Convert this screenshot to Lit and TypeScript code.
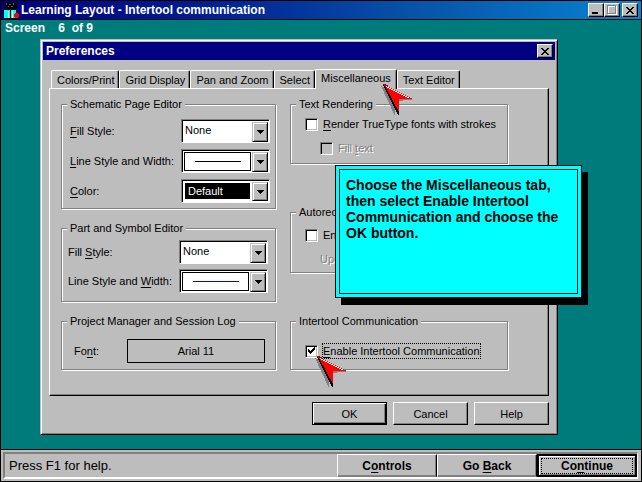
import { LitElement, html, css, nothing } from "lit";
import { customElement, property } from "lit/decorators.js";

const closeGlyph = html`<svg width="8" height="7" viewBox="0 0 8 7" shape-rendering="crispEdges" aria-hidden="true">
  <path d="M0 0h2v1h1v1h2V1h1V0h2v1H7v1H6v1H5v1h1v1h1v1h1v1H6V6H5V5H3v1H2v1H0V6h1V5h1V4h1V3H2V2H1V1H0z" />
</svg>`;

@customElement("pointer-arrow")
class PointerArrow extends LitElement {
  static styles = css`
    :host { display: block; pointer-events: none; }
    svg { display: block; }
  `;
  render() {
    return html`<svg width="34" height="34" viewBox="0 0 34 34" shape-rendering="crispEdges" aria-hidden="true">
      <path d="M1 3L15 33L16 18L30 17L33 16L30 15z" fill="#808080" />
      <path d="M3 1L33 16H19V31H18z" fill="#ff0000" />
      <path d="M3 2L18 32H19V24L7 5z" fill="#000" />
      <path d="M6 5L19 29V16H30z" fill="#ff0000" />
      <path d="M6 3.5L29 15" stroke="#fff" stroke-width="1" fill="none" />
      <path d="M3 1h2v1h2v1" stroke="#a00000" fill="none" />
    </svg>`;
  }
}

@customElement("combo-box")
class ComboBox extends LitElement {
  @property() text = "";
  @property() line = "";
  @property() label = "";
  @property({ type: Boolean }) picked = false;

  static styles = css`
    :host { display: block; width: 89px; flex: none; }
    .combo {
      display: grid; grid-template-columns: 1fr 16px; height: 24px; box-sizing: border-box;
      border: 1px solid; border-color: #808080 #fff #fff #808080;
      box-shadow: inset 1px 1px #000; background: #fff; padding: 2px 1px 1px 2px;
    }
    .combo > * { grid-row: 1; }
    select {
      grid-column: 1 / 3; appearance: none; border: 0; background: none; outline: none; width: 100%;
      margin: 0; padding: 0 16px 4px 1px; font: 11px/16px "Liberation Sans", sans-serif; color: #000;
    }
    .picked { color: #fff; background: #000 content-box; padding: 1px 18px 2px 1px; text-indent: 3px; }
    .swatch { grid-column: 1; border: 1px solid #000; margin: 0 1px 1px 0; display: flex; align-items: center; justify-content: center; pointer-events: none; }
    .drop {
      grid-column: 2; pointer-events: none; background: #bdbdbd; display: flex; align-items: center; justify-content: center;
      border: 1px solid; border-color: #bdbdbd #000 #000 #bdbdbd; box-shadow: inset 1px 1px #fff, inset -1px -1px #808080;
    }
    svg { display: block; }
  `;
  render() {
    return html`<div class="combo">
      <select class=${this.picked ? "picked" : nothing} aria-label=${this.label}><option>${this.text}</option></select>
      ${this.line
        ? html`<span class="swatch"><svg width="46" height="1" shape-rendering="crispEdges"><rect width="46" height="1" fill=${this.line} /></svg></span>`
        : nothing}
      <span class="drop"><svg width="7" height="4" shape-rendering="crispEdges"><path d="M0 0h7v1H6v1H5v1H4v1H3V3H2V2H1V1H0z" /></svg></span>
    </div>`;
  }
}

@customElement("app-root")
class AppRoot extends LitElement {
  static styles = css`
    :host {
      display: flex; flex-direction: column; min-height: 100vh; box-sizing: border-box; border: 1px solid #000;
      background: #007b7b; color: #000; font: 11px/16px "Liberation Sans", sans-serif;
    }
    * { box-sizing: border-box; }
    button { font: inherit; color: inherit; background: #bdbdbd; padding: 0; margin: 0; border: 0; }
    u { text-underline-offset: 2px; }
    h1, h2, p { margin: 0; }
    .bar {
      display: flex; align-items: center; height: 19px; padding: 0 3px 0 2px; border-bottom: 1px solid #000; color: #fff;
      background: linear-gradient(90deg, #000080, #001c90 30%, #0852a8 64%, #0884d0);
    }
    h1, h2, .step { font: bold 12px/16px "Liberation Sans", sans-serif; }
    h1 { flex: 1; margin-left: 1px; }
    .box {
      display: flex; align-items: center; justify-content: center; width: 16px; height: 14px; flex: none;
      border: 1px solid; border-color: #fff #000 #000 #fff; box-shadow: inset -1px -1px #808080;
    }
    .bar .close { margin-left: 2px; }
    .step { color: #fff; padding: 0 4px; white-space: pre; }
    .desk { flex: 1; padding: 3px 39px 14px; }

    .dialog {
      position: relative; width: 518px; background: #bdbdbd; border: 1px solid; border-color: #bdbdbd #000 #000 #bdbdbd;
      box-shadow: inset 1px 1px #fff, inset -1px -1px #808080; padding: 2px;
    }
    .caption { display: flex; align-items: center; height: 18px; background: #000080; color: #fff; padding: 0 2px 0 3px; }
    .caption h2 { flex: 1; }
    .content { padding: 9px 6px 7px; }
    .tabs { display: flex; align-items: flex-end; padding-left: 2px; height: 19px; }
    .tab {
      height: 18px; padding: 0 4px 0 5px; border: 1px solid; border-color: #fff #000 transparent #fff; border-bottom: 0;
      border-radius: 2px 2px 0 0; box-shadow: inset -1px 0 #808080; white-space: nowrap;
    }
    .tab.on { height: 20px; padding: 0 5px 3px; margin: 0 0 -1px; position: relative; }
    .tab.on pointer-arrow { position: absolute; left: 64px; top: 13px; z-index: 1; }
    .panel {
      display: grid; grid-template-columns: 215fr 218fr; column-gap: 14px; padding: 8px 40px 25px 11px;
      border: 1px solid; border-color: #fff #000 #000 #fff; box-shadow: inset -1px -1px #808080;
    }
    .col { display: flex; flex-direction: column; justify-content: space-between; gap: 12px; }
    fieldset { margin: 0; padding: 0; min-width: 0; border: 1px solid #808080; box-shadow: inset 1px 1px #fff, 1px 1px #fff; }
    legend { margin: 0 0 0 5px; padding: 0 3px; line-height: 14px; background: #bdbdbd; }
    .rows { display: flex; flex-direction: column; gap: 6px; padding: 8px 5px 5px 8px; }
    .rows.part { gap: 5px; padding: 5px 7px 8px 6px; }
    .row { display: flex; align-items: center; justify-content: space-between; white-space: nowrap; }
    .rows.font { padding: 11px 10px 6px 12px; }
    .fontbtn { width: 138px; height: 24px; border: 1px solid #000; }

    .checks { display: flex; flex-direction: column; gap: 8px; padding: 5px 0 7px 14px; }
    .checks.auto { padding: 8px 0 5px 14px; }
    .checks.inter { padding: 15px 0 10px 14px; }
    .check { display: flex; align-items: center; gap: 4px; height: 16px; position: relative; }
    .sub { margin-left: 15px; }
    .off { color: #808080; text-shadow: 1px 1px #fff; }
    .check label { border: 1px dotted transparent; line-height: 14px; white-space: nowrap; }
    .inter label { border-color: #000; }
    .check pointer-arrow { position: absolute; left: 9px; top: 12px; z-index: 1; }
    input {
      appearance: none; width: 13px; height: 13px; margin: 0; flex: none; background: #fff; border: 1px solid;
      border-color: #808080 #fff #fff #808080; box-shadow: inset 1px 1px #000, inset -1px -1px #bdbdbd;
    }
    input:disabled { background: #bdbdbd; }
    .tick { position: absolute; left: 3px; top: 4px; pointer-events: none; }

    .actions { display: flex; justify-content: flex-end; gap: 6px; padding-top: 6px; }
    .push {
      width: 75px; height: 23px; border: 1px solid; border-color: #fff #000 #000 #fff;
      box-shadow: inset -1px -1px #808080;
    }
    .push.main { border-color: #000; box-shadow: inset 1px 1px #fff, inset -1px -1px #000, inset -2px -2px #808080; }

    .note {
      position: absolute; left: 294px; top: 125px; width: 247px; height: 133px; padding: 3px; background: #00ffff;
      border: 1px solid #000; box-shadow: 6px 7px #000; font: bold 14px/16px "Liberation Sans", sans-serif;
    }
    .note p { height: 100%; border: 1px solid #000; padding: 7px 6px; }

    .status {
      display: flex; align-items: stretch; height: 32px; background: #bdbdbd; border-top: 1px solid #000; padding: 2px 3px 2px 2px;
    }
    .inset { flex: 1; display: flex; border: 2px solid; border-color: #808080 #fff #fff #808080; border-right-width: 1px; }
    .help { flex: 1; font: 13px/16px "Liberation Sans", sans-serif; padding: 4px; }
    .nav {
      width: 100px; border: 1px solid; border-color: #fff #000 #808080 #fff; box-shadow: inset -1px -1px #808080;
      font: bold 12px/16px "Liberation Sans", sans-serif;
    }
    .nav.go { border: 2px solid #000; box-shadow: inset 1px 1px #fff, inset -1px -1px #808080; padding: 2px; }
    .nav.go span { display: block; border: 1px dotted #000; line-height: 14px; }
  `;

  render() {
    return html`
      <header class="bar">
        <svg width="17" height="17" viewBox="0 0 17 17" shape-rendering="crispEdges" aria-hidden="true">
          <path d="M2 1h12v6H2z" fill="#000" />
          <path d="M3 1h1v2H3zM6 2h2v1H6zM10 1h1v2h-1zM5 4h1v1H5zM8 4h2v1H8z" fill="#606060" />
          <path d="M1 8h6v8H1zM8 8h5v8H8z" fill="#00ffff" />
          <path d="M1 7h12v1H1zM7 7h1v9H7zM0 8h1v8H0zM1 16h12v1H1z" fill="#000" />
          <path d="M5 9h1v7H5zM9 9h1v7H9z" fill="#fff" />
          <path d="M12 11h3v1h1v3h-1v1h-3v-1h-1v-3h1z" fill="#ff0000" />
          <path d="M13 9h1v2h-1z" fill="#800000" />
        </svg>
        <h1>Learning Layout - Intertool communication</h1>
        <button class="box" aria-label="Minimize"><svg width="8" height="8" shape-rendering="crispEdges"><path d="M0 6h6v2H0z" /></svg></button>
        <button class="box" aria-label="Maximize">
          <svg width="10" height="10" shape-rendering="crispEdges" fill="none"><path d="M1.5 1.5h8v8h-8z" stroke="#fff" /><path d="M.5 .5h8v8h-8z" stroke="#808080" /></svg>
        </button>
        <button class="box close" aria-label="Close">${closeGlyph}</button>
      </header>
      <div class="step">Screen    6  of 9</div>
      <main class="desk">
        <section class="dialog" role="dialog" aria-labelledby="title">
          <div class="caption">
            <h2 id="title">Preferences</h2>
            <button class="box" aria-label="Close">${closeGlyph}</button>
          </div>
          <div class="content">
            <div class="tabs" role="tablist">
              ${["Colors/Print", "Grid Display", "Pan and Zoom", "Select"].map((t) => html`<button class="tab" role="tab">${t}</button>`)}
              <button class="tab on" role="tab" aria-selected="true">Miscellaneous<pointer-arrow></pointer-arrow></button>
              <button class="tab" role="tab">Text Editor</button>
            </div>
            <div class="panel" role="tabpanel">
              <div class="col">
                <fieldset>
                  <legend>Schematic Page Editor</legend>
                  <div class="rows">
                    <div class="row"><span><u>F</u>ill Style:</span><combo-box label="Fill Style:" text="None"></combo-box></div>
                    <div class="row"><span><u>L</u>ine Style and Width:</span><combo-box label="Line Style and Width:" line="#000"></combo-box></div>
                    <div class="row"><span><u>C</u>olor:</span><combo-box label="Color:" text="Default" picked></combo-box></div>
                  </div>
                </fieldset>
                <fieldset>
                  <legend>Part and Symbol Editor</legend>
                  <div class="rows part">
                    <div class="row"><span>Fill <u>S</u>tyle:</span><combo-box label="Fill Style:" text="None"></combo-box></div>
                    <div class="row"><span>Line Style and <u>W</u>idth:</span><combo-box label="Line Style and Width:" line="#0000ff"></combo-box></div>
                  </div>
                </fieldset>
                <fieldset>
                  <legend>Project Manager and Session Log</legend>
                  <div class="rows font">
                    <div class="row"><label for="font">Fo<u>n</u>t:</label><button id="font" class="fontbtn">Arial 11</button></div>
                  </div>
                </fieldset>
              </div>
              <div class="col">
                <fieldset>
                  <legend>Text Rendering</legend>
                  <div class="checks">
                    <div class="check"><input type="checkbox" id="tt" /><label for="tt"><u>R</u>ender TrueType fonts with strokes</label></div>
                    <div class="check sub off"><input type="checkbox" id="fill" disabled /><label for="fill">Fill <u>t</u>ext</label></div>
                  </div>
                </fieldset>
                <fieldset>
                  <legend>Autorecovery</legend>
                  <div class="checks auto">
                    <div class="check"><input type="checkbox" id="auto" /><label for="auto">Enable</label></div>
                    <div class="check sub off">Update</div>
                  </div>
                </fieldset>
                <fieldset>
                  <legend>Intertool Communication</legend>
                  <div class="checks inter">
                    <div class="check">
                      <input type="checkbox" id="inter" checked /><label for="inter"><u>E</u>nable Intertool Communication</label>
                      <svg class="tick" width="7" height="7" shape-rendering="crispEdges"><path d="M0 2h1v1h1v1h1V3h1V2h1V1h1V0h1v3H6v1H5v1H4v1H3v1H2V6H1V5H0z" /></svg>
                      <pointer-arrow></pointer-arrow>
                    </div>
                  </div>
                </fieldset>
              </div>
            </div>
            <div class="actions">
              <button class="push main">OK</button>
              <button class="push">Cancel</button>
              <button class="push">Help</button>
            </div>
          </div>
          <aside class="note"><p>Choose the Miscellaneous tab, then select Enable Intertool Communication and choose the OK button.</p></aside>
        </section>
      </main>
      <footer class="status">
        <div class="inset">
          <span class="help">Press F1 for help.</span>
          <button class="nav">C<u>o</u>ntrols</button>
          <button class="nav">Go <u>B</u>ack</button>
          <button class="nav go"><span>Co<u>n</u>tinue</span></button>
        </div>
      </footer>
    `;
  }
}
